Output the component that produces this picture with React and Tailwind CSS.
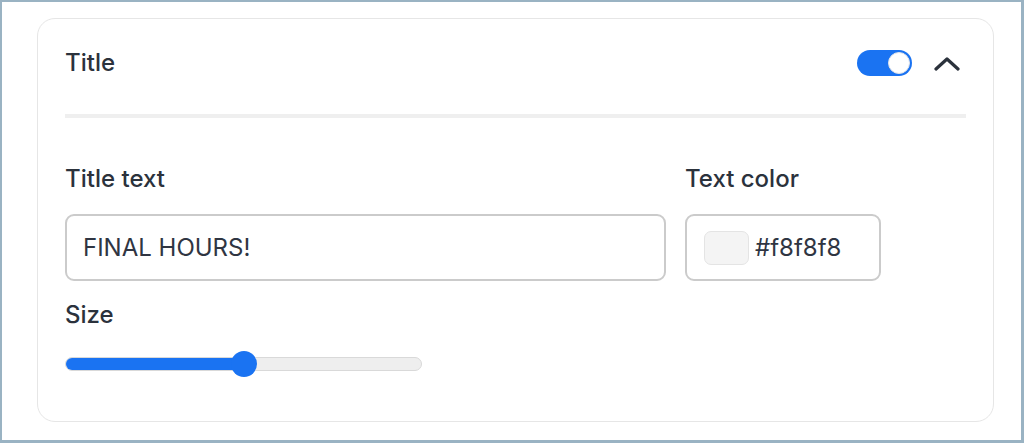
import React, { useState } from "react";

const font = { fontFamily: "Inter, 'Noto Sans', sans-serif" };

const Toggle = ({ on, onChange }) => (
  <button
    onClick={() => onChange(!on)}
    className={`relative flex h-[26px] w-[55px] items-center rounded-full p-[2px] ${
      on ? "justify-end bg-[#1a73f2]" : "justify-start bg-[#d5d8dd]"
    }`}
  >
    <span className="h-[22px] w-[22px] rounded-full border border-[#dfe3ea] bg-white" />
  </button>
);

const Slider = ({ value }) => (
  <div className="relative flex h-[26px] w-[357px] items-center">
    <div className="h-[14px] w-full overflow-hidden rounded-full border border-[#d9d9d9] bg-[#eeeeee]">
      <div className="h-full bg-[#1a73f2]" style={{ width: `${value}%` }} />
    </div>
    <span
      className="absolute top-0 h-[26px] w-[26px] rounded-full bg-[#1a73f2]"
      style={{ left: `calc(${value / 100} * (100% - 26px))` }}
    />
  </div>
);

export default function App() {
  const [enabled, setEnabled] = useState(true);
  const [title, setTitle] = useState("FINAL HOURS!");

  return (
    <div
      className="box-border h-[443px] w-full border-t-2 border-l-2 border-r-[3px] border-b-[3px] border-[#9ab3c3] bg-white pl-[35px] pt-[16px] pr-[27px] pb-[18px]"
      style={font}
    >
      <div className="h-full rounded-[18px] border border-[#e6e6e6] px-[27px] pt-[26px]">
        {/* Header */}
        <div className="flex items-start justify-between pr-[6px]">
          <h2 className="mt-[2px] text-[24px] font-[550] leading-8 text-[#2b323c]">Title</h2>
          <div className="flex items-start gap-[22px]">
            <div className="mt-[5px]">
              <Toggle on={enabled} onChange={setEnabled} />
            </div>
            <svg
              className="mt-[12px]"
              width="26"
              height="14"
              viewBox="0 0 26 14"
              fill="none"
              stroke="#2b323c"
              strokeWidth="3.2"
              strokeLinecap="round"
              strokeLinejoin="round"
            >
              <polyline points="2,12 13,2 24,12" />
            </svg>
          </div>
        </div>

        <div className="mt-[35px] h-1 bg-[#efefef]" />

        {/* Fields */}
        <div className="mt-[45px] flex gap-[19px]">
          <div className="w-[601px]">
            <label className="block text-[24px] font-[550] leading-8 text-[#2b323c]">
              Title text
            </label>
            <input
              value={title}
              onChange={(e) => setTitle(e.target.value)}
              className="mt-[19px] h-[67px] w-full rounded-[9px] border-2 border-[#cbcbcb] px-[16px] text-[24px] text-[#2f3542] outline-none"
              style={font}
            />
          </div>
          <div className="w-[196px]">
            <label className="block text-[24px] font-[550] leading-8 text-[#2b323c]">
              Text color
            </label>
            <div className="mt-[19px] flex h-[67px] w-full items-center gap-[6px] rounded-[9px] border-2 border-[#cbcbcb] px-[17px]">
              <span className="h-[34px] w-[45px] rounded-[7px] border border-[#e4e4e4] bg-[#f4f4f4]" />
              <span className="text-[24px] text-[#2f3542]">#f8f8f8</span>
            </div>
          </div>
        </div>

        <label className="mt-[18px] block text-[24px] font-[550] leading-8 text-[#2b323c]">
          Size
        </label>
        <div className="mt-[20px]">
          <Slider value={50} />
        </div>
      </div>
    </div>
  );
}
